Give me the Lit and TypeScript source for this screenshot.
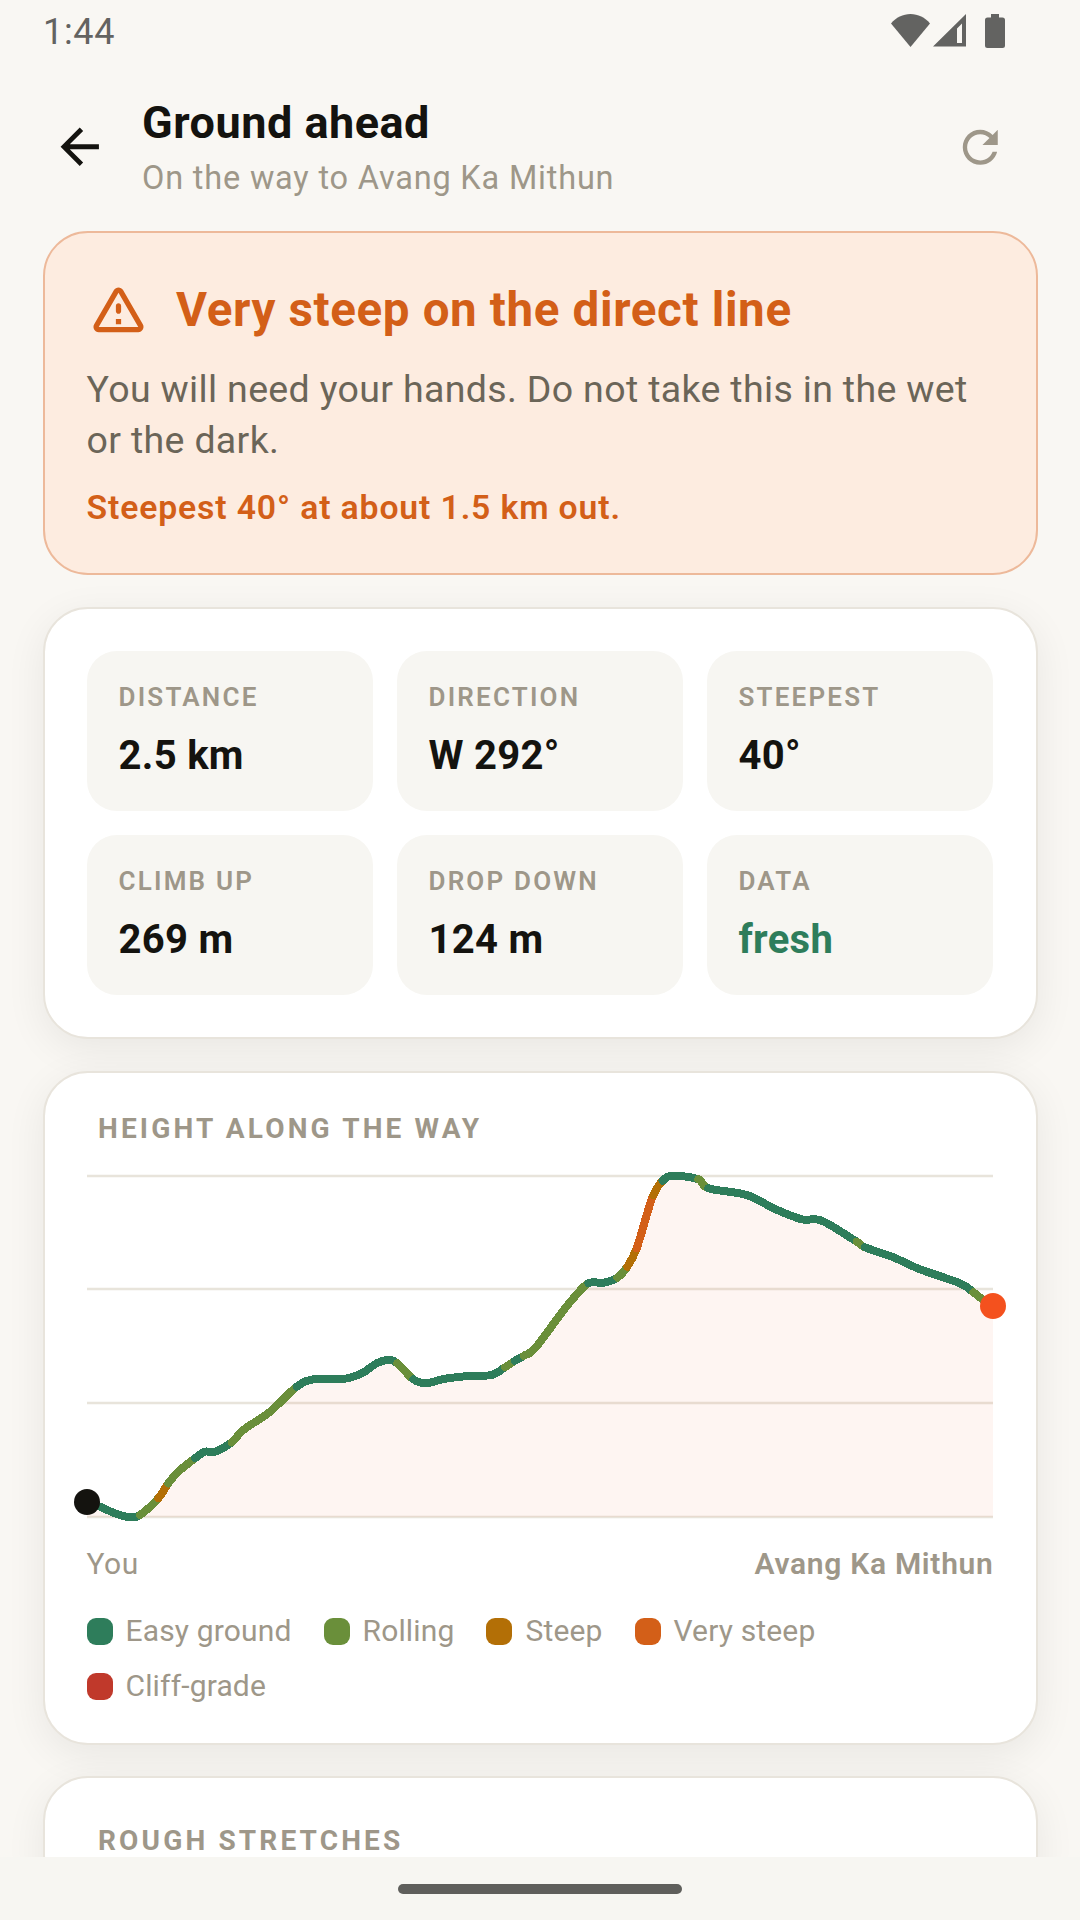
import { LitElement, html, css, svg } from "lit";
import { customElement } from "lit/decorators.js";

const GRADES: Record<string, string> = {
  easy: "#2e7d5b",
  rolling: "#6a8f3a",
  steep: "#b36f06",
  very: "#d35f18",
  cliff: "#c0392b",
};

// chart runs, each one starts where the previous one ended
const RUNS: [string, number[]][] = [
  ["easy", [0, 327, 13, 331.7, 29.7, 339, 43.7, 342.3, 53, 340]],
  ["rolling", [71.3, 323.3]],
  ["steep", [81.3, 308.3]],
  ["rolling", [91.3, 296.7, 108, 283.3]],
  ["easy", [118, 276.7, 128, 276.7, 144.7, 267.3]],
  ["rolling", [156.3, 255, 183, 236.7, 209.7, 211.7]],
  ["easy", [228, 204, 256.3, 204, 274.7, 198.3, 289.7, 188.3, 301.3, 185, 310.3, 188.3]],
  ["rolling", [326.3, 204.3]],
  ["easy", [339.7, 208.3, 356.3, 204, 384.7, 200.7, 404.7, 200, 418, 192.3]],
  ["rolling", [428, 185.7]],
  ["easy", [437, 180.7]],
  ["rolling", [448, 173.3, 473, 140, 486.3, 123.3, 501.3, 108.3]],
  ["easy", [516.3, 107.7, 530.3, 102.7]],
  ["rolling", [540.3, 91.7]],
  ["steep", [549.7, 73.3]],
  ["very", [559.7, 40, 566.3, 20]],
  ["steep", [575.7, 5.7]],
  ["easy", [586.3, 0.7, 611.3, 4.3]],
  ["rolling", [621.3, 13.3]],
  ["easy", [659.7, 20, 688, 34, 714.7, 44.3, 734.7, 45.7, 769.7, 66.7]],
  ["rolling", [778, 72.3]],
  ["easy", [806.3, 82.3, 833, 94.3, 873, 108.3, 886.3, 117.3]],
  ["rolling", [896.3, 125, 906, 131]],
];

const POINTS: [number, number][] = [];
const EDGES: string[] = [];
for (const [grade, nums] of RUNS) {
  for (let i = 0; i < nums.length; i += 2) {
    if (POINTS.length) EDGES.push(grade);
    POINTS.push([nums[i], nums[i + 1]]);
  }
}

// catmull-rom piece between point i and i+1
function piece(i: number) {
  const a = POINTS[Math.max(i - 1, 0)];
  const b = POINTS[i];
  const c = POINTS[i + 1];
  const d = POINTS[Math.min(i + 2, POINTS.length - 1)];
  const c1x = b[0] + (c[0] - a[0]) / 6;
  const c1y = b[1] + (c[1] - a[1]) / 6;
  const c2x = c[0] - (d[0] - b[0]) / 6;
  const c2y = c[1] - (d[1] - b[1]) / 6;
  return `C${c1x} ${c1y} ${c2x} ${c2y} ${c[0]} ${c[1]}`;
}

const AREA =
  `M0 342L${POINTS[0].join(" ")}` +
  EDGES.map((_, i) => piece(i)).join("") +
  "L906 342Z";

function runPaths() {
  const out: { grade: string; d: string }[] = [];
  EDGES.forEach((grade, i) => {
    const last = out[out.length - 1];
    if (last && last.grade === grade) last.d += piece(i);
    else out.push({ grade, d: `M${POINTS[i].join(" ")}${piece(i)}` });
  });
  return out;
}

const STATS = [
  { label: "DISTANCE", value: "2.5 km" },
  { label: "DIRECTION", value: "W 292°" },
  { label: "STEEPEST", value: "40°" },
  { label: "CLIMB UP", value: "269 m" },
  { label: "DROP DOWN", value: "124 m" },
  { label: "DATA", value: "fresh", good: true },
];

const LEGEND = [
  { grade: "easy", label: "Easy ground" },
  { grade: "rolling", label: "Rolling" },
  { grade: "steep", label: "Steep" },
  { grade: "very", label: "Very steep" },
  { grade: "cliff", label: "Cliff-grade" },
];

@customElement("app-root")
export class AppRoot extends LitElement {
  static styles = css`
    :host {
      display: block;
      width: 1080px;
      height: 1920px;
      overflow: hidden;
      font-family: Roboto, sans-serif;
      background: #f9f7f3;
      color: #14130f;
    }
    .page {
      display: flex;
      flex-direction: column;
      height: 1920px;
      overflow: hidden;
    }
    .status {
      flex: none;
      display: flex;
      align-items: center;
      justify-content: space-between;
      box-sizing: border-box;
      height: 63px;
      padding: 0 75px 0 43px;
      font-size: 36px;
      letter-spacing: 0.7px;
      color: #636361;
    }
    .status-icons {
      display: flex;
      align-items: flex-start;
      height: 34px;
      margin-bottom: 1px;
    }
    .status-icons svg {
      display: block;
      fill: #636361;
    }
    .status-icons .signal {
      margin: 0 19px 0 3px;
    }
    .bar {
      flex: none;
      display: flex;
      align-items: center;
      height: 168px;
      padding: 0 74px 0 50.5px;
      box-sizing: border-box;
    }
    .bar svg {
      display: block;
      flex: none;
    }
    .back {
      width: 57.5px;
      height: 57.5px;
      fill: #14130f;
    }
    .refresh {
      width: 52.5px;
      height: 52.5px;
      fill: #9e9789;
    }
    .titles {
      flex: 1;
      margin-left: 34.1px;
      padding-top: 1.7px;
    }
    .title {
      font-size: 45px;
      font-weight: 700;
      line-height: 50px;
      letter-spacing: 0.5px;
    }
    .sub {
      font-size: 32.5px;
      line-height: 40px;
      margin-top: 10.3px;
      letter-spacing: 0.8px;
      color: #9e9789;
    }
    .content {
      flex: 1;
      min-height: 0;
      overflow: hidden;
      display: flex;
      flex-direction: column;
      gap: 32px;
      padding: 0 42.5px;
    }
    .card {
      flex: none;
      box-sizing: border-box;
      border: 2.5px solid #e8e4dc;
      border-radius: 45px;
      background: #fff;
      padding: 42px;
      box-shadow: 0 10px 40px rgba(20, 19, 15, 0.07);
    }
    .alert {
      background: #fdece0;
      border-color: #edb99a;
      box-shadow: none;
      height: 343.5px;
      padding-top: 46.5px;
    }
    .alert-head {
      display: flex;
      align-items: center;
      gap: 26.5px;
      height: 60px;
    }
    .alert-head svg {
      flex: none;
      width: 63px;
      height: 63px;
      margin-bottom: 3px;
      fill: #d35f18;
    }
    .alert-title {
      font-size: 47.5px;
      font-weight: 700;
      letter-spacing: 0.65px;
      color: #d35f18;
    }
    .alert-body {
      margin-top: 24px;
      font-size: 37.5px;
      line-height: 51.5px;
      letter-spacing: 0.34px;
      color: #6b6558;
    }
    .alert-note {
      margin-top: 21.5px;
      font-size: 33.75px;
      line-height: 40px;
      font-weight: 600;
      letter-spacing: 0.86px;
      color: #d35f18;
    }
    .stats {
      display: grid;
      grid-template-columns: repeat(3, 286px);
      gap: 24px;
    }
    .tile {
      box-sizing: border-box;
      height: 160px;
      border-radius: 30px;
      background: #f7f6f2;
      padding: 30px 32px;
    }
    .tile-label {
      font-size: 26px;
      line-height: 32px;
      font-weight: 600;
      letter-spacing: 2.2px;
      color: #9e9789;
    }
    .tile-value {
      margin-top: 19.4px;
      font-size: 40px;
      line-height: 48px;
      font-weight: 700;
      letter-spacing: 0.3px;
    }
    .tile-value.good {
      color: #2e7d5b;
    }
    .section {
      font-size: 28px;
      line-height: 28px;
      font-weight: 700;
      letter-spacing: 3.15px;
      color: #9e9789;
      padding-left: 11.5px;
    }
    .rough {
      margin-top: 6.4px;
    }
    .chart-card {
      padding-bottom: 38.4px;
    }
    .last-card {
      margin-top: -1px;
    }
    .graph {
      display: block;
      overflow: visible;
      margin-top: 32px;
    }
    .graph .grid {
      stroke: #e8e4db;
      stroke-width: 2.5;
    }
    .graph .area {
      fill: rgba(244, 81, 30, 0.06);
    }
    .graph .run {
      fill: none;
      stroke-width: 8;
      stroke-linecap: round;
      stroke-linejoin: round;
      shape-rendering: crispEdges;
    }
    .ends {
      display: flex;
      justify-content: space-between;
      margin-top: 26.5px;
      font-size: 30px;
      line-height: 40px;
      letter-spacing: 0.5px;
      color: #9e9789;
    }
    .ends b {
      font-weight: 600;
      letter-spacing: 0.7px;
    }
    .legend {
      display: flex;
      flex-wrap: wrap;
      gap: 15px 32px;
      margin-top: 26px;
    }
    .key {
      display: flex;
      align-items: center;
      gap: 13px;
      height: 40px;
      font-size: 30px;
      letter-spacing: 0.15px;
      color: #9e9789;
    }
    .swatch {
      width: 26px;
      height: 27px;
      margin-top: 2px;
      border-radius: 9px;
    }
    .nav {
      flex: none;
      display: flex;
      align-items: center;
      justify-content: center;
      height: 63px;
      background: #f7f6f2;
      position: relative;
      z-index: 1;
    }
    .pill {
      width: 284px;
      height: 10px;
      border-radius: 5px;
      background: #5f5f5c;
    }
  `;

  renderGraph() {
    return html`<svg class="graph" width="906" height="343" viewBox="0 0 906 343">
      ${[1, 114, 228, 342].map((y) => svg`<line class="grid" x1="0" x2="906" y1=${y} y2=${y}></line>`)}
      <path class="area" d=${AREA}></path>
      ${runPaths().map((r) => svg`<path class="run" stroke=${GRADES[r.grade]} d=${r.d}></path>`)}
      <circle cx="0" cy="327" r="13" fill="#14130f"></circle>
      <circle cx="906" cy="131" r="13" fill="#f4511e"></circle>
    </svg>`;
  }

  render() {
    return html`
      <div class="page">
        <div class="status">
          <span>1:44</span>
          <div class="status-icons">
            <svg width="39" height="33" viewBox="0 0 39 33">
              <path d="M0 9.5C5 3.5 12 0 19.5 0S34 3.5 39 9.5L19.5 33Z"></path>
            </svg>
            <svg class="signal" width="33" height="33" viewBox="0 0 33 33">
              <path fill-rule="evenodd" d="M0 32.5L33 0V32.5ZM24 14.5V29H29V9.5Z"></path>
            </svg>
            <svg width="20" height="34" viewBox="0 0 20 34">
              <path d="M6 0H14V3.5H17.5A2.5 2.5 0 0 1 20 6V31.5A2.5 2.5 0 0 1 17.5 34H2.5A2.5 2.5 0 0 1 0 31.5V6A2.5 2.5 0 0 1 2.5 3.5H6Z"></path>
            </svg>
          </div>
        </div>

        <div class="bar">
          <svg class="back" viewBox="0 0 24 24">
            <path d="M20 11H7.83l5.59-5.59L12 4l-8 8 8 8 1.41-1.41L7.83 13H20v-2z"></path>
          </svg>
          <div class="titles">
            <div class="title">Ground ahead</div>
            <div class="sub">On the way to Avang Ka Mithun</div>
          </div>
          <svg class="refresh" viewBox="0 0 24 24">
            <path d="M17.65 6.35C16.2 4.9 14.21 4 12 4c-4.42 0-7.99 3.58-7.99 8s3.57 8 7.99 8c3.73 0 6.84-2.55 7.73-6h-2.08c-.82 2.33-3.04 4-5.65 4-3.31 0-6-2.69-6-6s2.69-6 6-6c1.66 0 3.14.69 4.22 1.78L13 11h7V4l-2.35 2.35z"></path>
          </svg>
        </div>

        <div class="content">
          <section class="card alert">
            <div class="alert-head">
              <svg viewBox="0 0 24 24">
                <path d="M12 5.99 19.53 19H4.47L12 5.99M2.74 18c-.77 1.33.19 3 1.73 3h15.06c1.54 0 2.5-1.67 1.73-3L13.73 4.99c-.77-1.33-2.69-1.33-3.46 0L2.74 18zM11 11v2c0 .55.45 1 1 1s1-.45 1-1v-2c0-.55-.45-1-1-1s-1 .45-1 1zm0 5h2v2h-2z"></path>
              </svg>
              <div class="alert-title">Very steep on the direct line</div>
            </div>
            <div class="alert-body">You will need your hands. Do not take this in the wet or the dark.</div>
            <div class="alert-note">Steepest 40° at about 1.5 km out.</div>
          </section>

          <section class="card">
            <div class="stats">
              ${STATS.map(
                (s) => html`<div class="tile">
                  <div class="tile-label">${s.label}</div>
                  <div class="tile-value ${s.good ? "good" : ""}">${s.value}</div>
                </div>`
              )}
            </div>
          </section>

          <section class="card chart-card">
            <div class="section">HEIGHT ALONG THE WAY</div>
            ${this.renderGraph()}
            <div class="ends"><span>You</span><b>Avang Ka Mithun</b></div>
            <div class="legend">
              ${LEGEND.map(
                (l) => html`<div class="key">
                  <span class="swatch" style="background:${GRADES[l.grade]}"></span>${l.label}
                </div>`
              )}
            </div>
          </section>

          <section class="card last-card">
            <div class="section rough">ROUGH STRETCHES</div>
          </section>
        </div>

        <div class="nav"><div class="pill"></div></div>
      </div>
    `;
  }
}
